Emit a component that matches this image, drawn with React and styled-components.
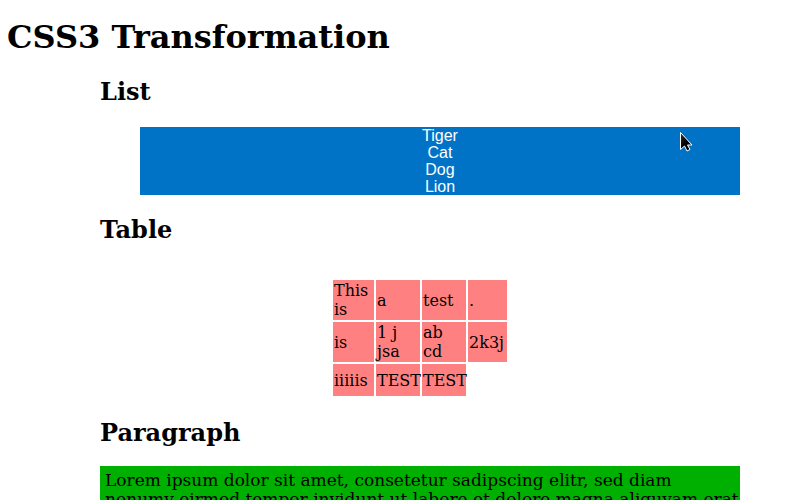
import React from "react";
import styled, { createGlobalStyle } from "styled-components";

const GlobalStyle = createGlobalStyle`
  html { overflow: hidden; }
  body {
    margin: 0;
    background: #fff;
    color: #000;
    font: 16px/19px "DejaVu Serif", serif;
  }
`;

const Page = styled.main`
  padding: 18px 0 0 7px;
`;

const Title = styled.h1`
  margin: 0 0 22px;
  font-size: 32px;
  line-height: 38px;
`;

const Section = styled.section`
  margin: 0 60px 21px 93px;
`;

const Heading = styled.h2`
  margin: 0;
  font-size: 24px;
  line-height: 28px;
`;

const AnimalList = styled.ul`
  margin: 21px 0 0 40px;
  padding: 0;
  list-style: none;
  background: #0073c7;
  color: #fff;
  text-align: center;
  font: 16px/17px "Liberation Sans", sans-serif;
`;

const DataTable = styled.table`
  table-layout: fixed;
  width: 178px;
  margin: 34px auto 0;
  border-collapse: separate;
  border-spacing: 2px;
`;

const Cell = styled.td`
  box-sizing: border-box;
  width: ${({ $width }) => $width}px;
  height: ${({ $short }) => ($short ? 32 : 40)}px;
  padding: 1px;
  background: #ff8080;
`;

const Paragraph = styled.p`
  margin: 19px 0 0;
  padding: 5px 0 5px 5px;
  background: #00b000;
  font-size: 17px;
`;

const Pointer = styled.svg`
  position: absolute;
  left: 680px;
  top: 131px;
  width: 13px;
  height: 22px;
`;

const animals = ["Tiger", "Cat", "Dog", "Lion"];
const widths = [41, 44, 44, 39];
const rows = [
  ["This is", "a", "test", "."],
  ["is", "1 j jsa", "ab cd", "2k3j"],
  ["iiiiis", "TEST", "TEST"],
];

export default function App() {
  return (
    <Page>
      <GlobalStyle />
      <Title>CSS3 Transformation</Title>
      <Section>
        <Heading>List</Heading>
        <AnimalList>
          {animals.map((name) => <li key={name}>{name}</li>)}
        </AnimalList>
      </Section>
      <Section>
        <Heading>Table</Heading>
        <DataTable>
          <tbody>
            {rows.map((row, r) => (
              <tr key={r}>
                {row.map((text, c) => (
                  <Cell key={c} $width={widths[c]} $short={r === 2}>{text}</Cell>
                ))}
              </tr>
            ))}
          </tbody>
        </DataTable>
      </Section>
      <Section>
        <Heading>Paragraph</Heading>
        <Paragraph>
          Lorem ipsum dolor sit amet, consetetur sadipscing elitr, sed diam
          <br />
          nonumy eirmod tempor invidunt ut labore et dolore magna aliquyam erat
        </Paragraph>
      </Section>
      <Pointer viewBox="0 0 13 22" aria-hidden="true">
        <defs>
          <linearGradient id="pointer-fill" x1="0" y1="0" x2="1" y2="1">
            <stop offset="0" stopColor="#333" />
            <stop offset="0.5" stopColor="#000" />
          </linearGradient>
        </defs>
        <path
          d="M.5 1.5v17l4-3.5 2.5 5 3-1.5-2.5-4.5h4.5z"
          fill="url(#pointer-fill)"
          stroke="#fff"
        />
      </Pointer>
    </Page>
  );
}
